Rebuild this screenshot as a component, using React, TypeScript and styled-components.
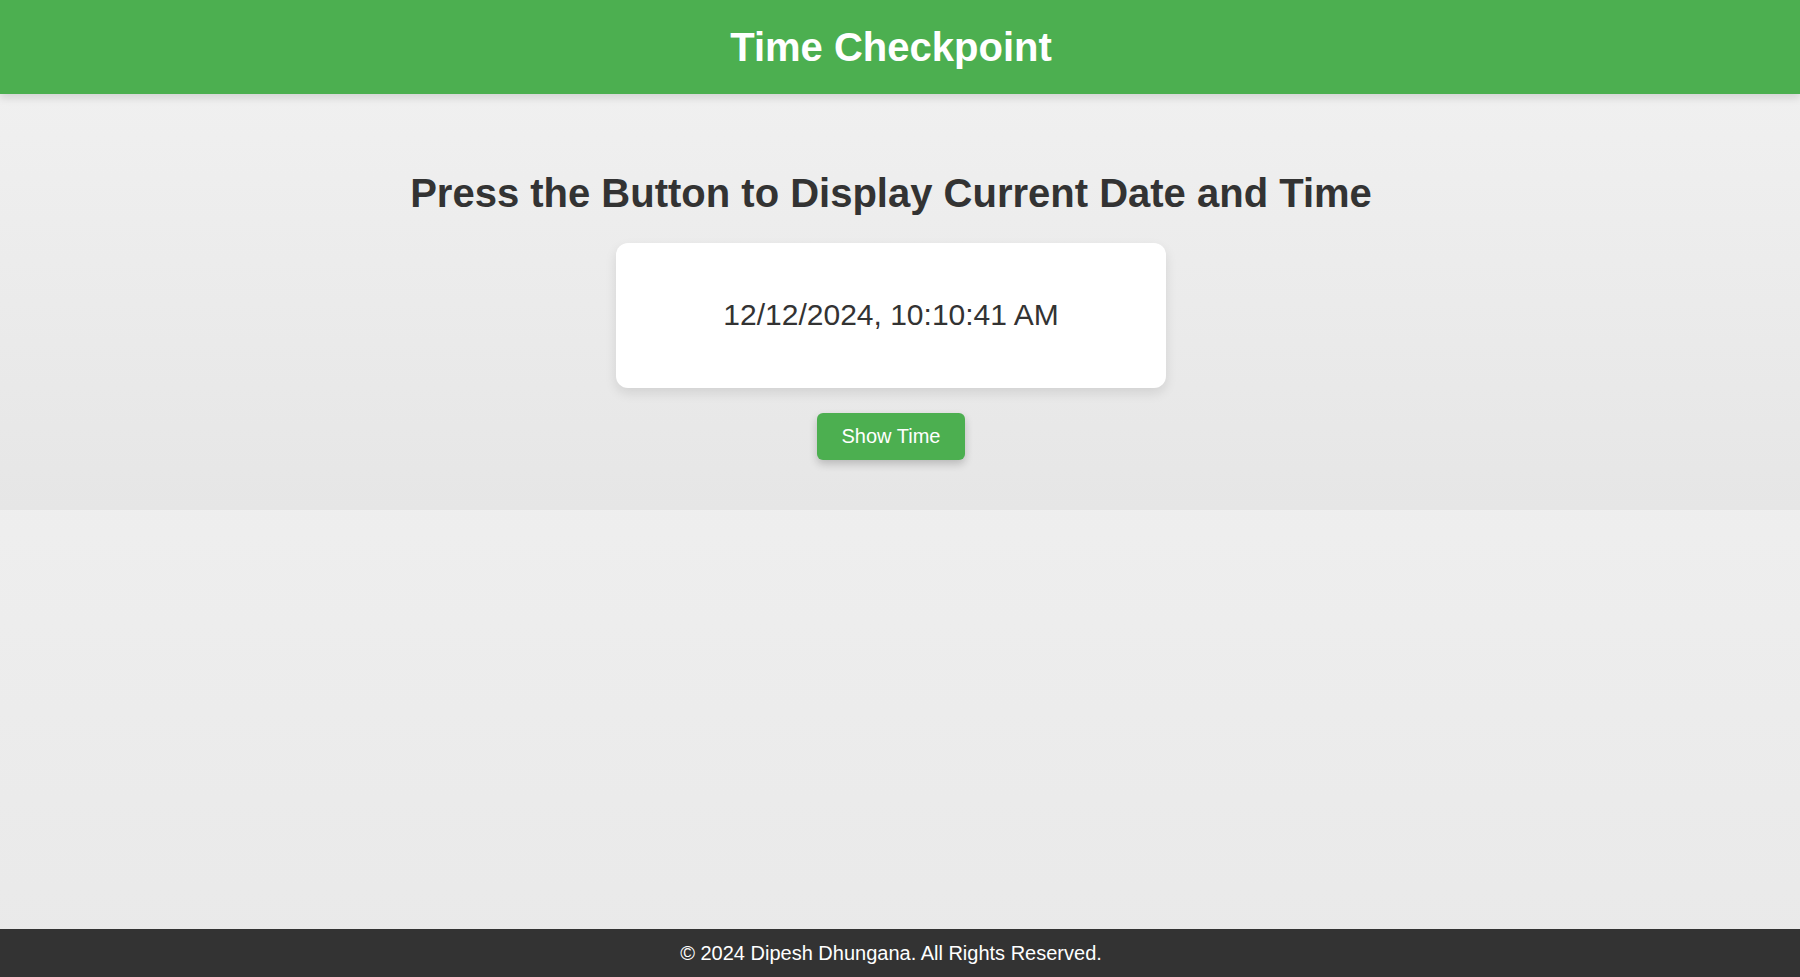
import React, { useState } from 'react';
import styled, { createGlobalStyle } from 'styled-components';

const GlobalStyle = createGlobalStyle`
  * {
    box-sizing: border-box;
  }

  html,
  body {
    margin: 0;
    padding: 0;
    height: 100%;
  }

  body {
    font-family: "Liberation Sans", Arial, sans-serif;
    color: #333;
    background: #f0f0f0;
  }

  #root {
    min-height: 100vh;
  }
`;

const gutter = '18px';

const Page = styled.div`
  display: flex;
  flex-direction: column;
  min-height: 100vh;
  background: linear-gradient(to bottom, #f4f4f4, #e9e9e9);
`;

const Header = styled.header`
  position: relative;
  z-index: 1;
  background: #4caf50;
  color: #fff;
  text-align: center;
  padding: 24px ${gutter} 24px 0;
  box-shadow: 0 4px 8px rgba(0, 0, 0, 0.12);
`;

const Title = styled.h1`
  margin: 0;
  font-size: 40px;
  font-weight: 700;
  line-height: 46px;
`;

const Section = styled.main`
  display: flex;
  flex-direction: column;
  align-items: center;
  padding: 76px ${gutter} 50px 0;
  background: linear-gradient(to bottom, #f0f0f0, #e6e6e6);
`;

const Heading = styled.h2`
  margin: 0 0 27px;
  font-size: 40px;
  font-weight: 700;
  line-height: 46px;
  color: #333;
`;

const TimeCard = styled.div`
  width: 550px;
  padding: 25px;
  background: #fff;
  border-radius: 12px;
  box-shadow: 0 5px 12px rgba(0, 0, 0, 0.1);
  text-align: center;
`;

const TimeText = styled.p`
  margin: 30px 0;
  font-size: 30px;
  line-height: 34.5px;
  color: #333;
`;

const ShowButton = styled.button`
  margin-top: 25px;
  padding: 12px 25px;
  font-family: "Liberation Sans", Arial, sans-serif;
  font-size: 20px;
  line-height: 23px;
  color: #fff;
  background: #4caf50;
  border: none;
  border-radius: 6px;
  box-shadow: 0 4px 8px rgba(0, 0, 0, 0.2);
  cursor: pointer;

  &:hover {
    background: #45a049;
  }
`;

const Spacer = styled.div`
  flex: 1;
`;

const Footer = styled.footer`
  background: #333;
  color: #fff;
  text-align: center;
  padding: 12.5px ${gutter} 12.5px 0;
  font-size: 20px;
  line-height: 23px;
`;

export default function App() {
  const [time, setTime] = useState('12/12/2024, 10:10:41 AM');

  return (
    <>
      <GlobalStyle />
      <Page>
        <Header>
          <Title>Time Checkpoint</Title>
        </Header>
        <Section>
          <Heading>Press the Button to Display Current Date and Time</Heading>
          <TimeCard>
            <TimeText>{time}</TimeText>
          </TimeCard>
          <ShowButton onClick={() => setTime(new Date().toLocaleString('en-US'))}>
            Show Time
          </ShowButton>
        </Section>
        <Spacer />
        <Footer>© 2024 Dipesh Dhungana. All Rights Reserved.</Footer>
      </Page>
    </>
  );
}
